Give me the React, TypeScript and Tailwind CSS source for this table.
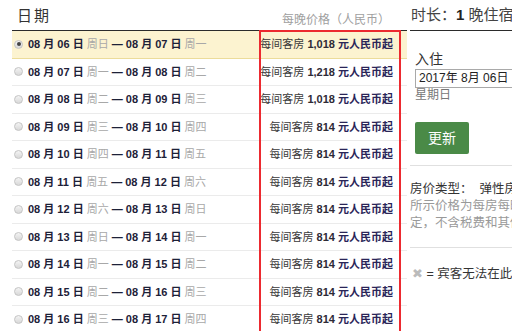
const font = { fontFamily: '"Liberation Sans", "Noto Sans CJK SC", sans-serif' };

const rows = [
  ["06", "周日", "07", "周一", "1,018"],
  ["07", "周一", "08", "周二", "1,218"],
  ["08", "周二", "09", "周三", "1,018"],
  ["09", "周三", "10", "周四", "814"],
  ["10", "周四", "11", "周五", "814"],
  ["11", "周五", "12", "周六", "814"],
  ["12", "周六", "13", "周日", "814"],
  ["13", "周日", "14", "周一", "814"],
  ["14", "周一", "15", "周二", "814"],
  ["15", "周二", "16", "周三", "814"],
  ["16", "周三", "17", "周四", "814"],
];

function Radio({ checked }: { checked?: boolean }) {
  return (
    <span className="ml-[2px] w-[9px] h-[9px] rounded-full border border-[#c4c4c4] bg-gradient-to-b from-[#f4f4f4] to-[#d8d8d8] flex items-center justify-center shrink-0">
      {checked && <span className="w-[4px] h-[4px] rounded-full bg-[#444]" />}
    </span>
  );
}

export default function App() {
  return (
    <div className="w-[525px] h-[331px] overflow-hidden bg-white flex" style={font}>
      <div className="relative ml-[12px] w-[395px] shrink-0">
        <div className="h-[31px] border-b border-[#2b2b2b] flex justify-between">
          <span className="pl-[5px] mt-[6px] text-[15px] leading-[20px] text-[#333] tracking-[2px]">日期</span>
          <span className="pr-[17px] mt-[13px] text-[12px] leading-[14px] text-[#a0a0a0]">每晚价格（人民币）</span>
        </div>
        {rows.map((r, i) => (
          <div
            key={i}
            className={`h-[27.5px] flex items-center border-b ${i === 0 ? "bg-[#fcf3d0] border-[#ecdc9a]" : "border-[#ebebeb]"}`}
          >
            <Radio checked={i === 0} />
            <span className="ml-[5px] text-[11px] whitespace-nowrap text-[#1d2138]">
              <b>08 月 {r[0]} 日</b> <span className="text-[#a8a8a8]">{r[1]}</span> <b>—</b> <b>08 月 {r[2]} 日</b>{" "}
              <span className="text-[#a8a8a8]">{r[3]}</span>
            </span>
            <span className="ml-auto pr-[14px] text-[11px] whitespace-nowrap">
              <span className="text-[#3a3a3a]">每间客房</span> <b className="text-[#2e2a36]">{r[4]}</b>{" "}
              <b className="text-[#2a2558]">元人民币起</b>
            </span>
          </div>
        ))}
        <div className="absolute left-[247px] top-[30px] w-[142px] h-[320px] border-2 border-[#ec2a30]" />
      </div>

      <div className="ml-[3px] w-[102px] overflow-hidden whitespace-nowrap shrink-0">
        <div className="h-[31px] border-b border-[#2b2b2b] pl-[1px] pt-[6px] text-[15px] leading-[18px] text-[#444]">
          时长：<b className="text-[#222]">1</b> 晚住宿
        </div>
        <div className="pl-[5px]">
          <div className="mt-[19px] text-[14px] leading-[18px] text-[#333]">入住</div>
          <div className="mt-[1px] h-[19px] w-[120px] border border-[#a9a9a9] pl-[3px] text-[12px] leading-[17px] text-[#222]">
            2017年 8月 06日
          </div>
          <div className="text-[12px] leading-[15px] text-[#777]">星期日</div>
          <div className="mt-[19px] w-[54px] h-[32px] rounded-[2px] bg-[#4a8a47] flex items-center justify-center text-[14px] text-white">
            更新
          </div>
        </div>
        <div className="mt-[11px] border-b border-[#e0e0e0]" />
        <div className="mt-[15px] text-[12.5px] leading-[17px] text-[#333]">房价类型：&nbsp; 弹性房价</div>
        <div className="text-[12.5px] leading-[17px] text-[#999]">所示价格为每房每晚价格</div>
        <div className="text-[12.5px] leading-[17px] text-[#999]">定，不含税费和其他费用</div>
        <div className="mt-[15px] border-b border-[#e0e0e0]" />
        <div className="mt-[18px] pl-[2px] text-[12.5px] leading-[17px] text-[#333]">
          <span className="text-[#bbb]">✖</span> = 宾客无法在此日期入住
        </div>
      </div>
    </div>
  );
}
